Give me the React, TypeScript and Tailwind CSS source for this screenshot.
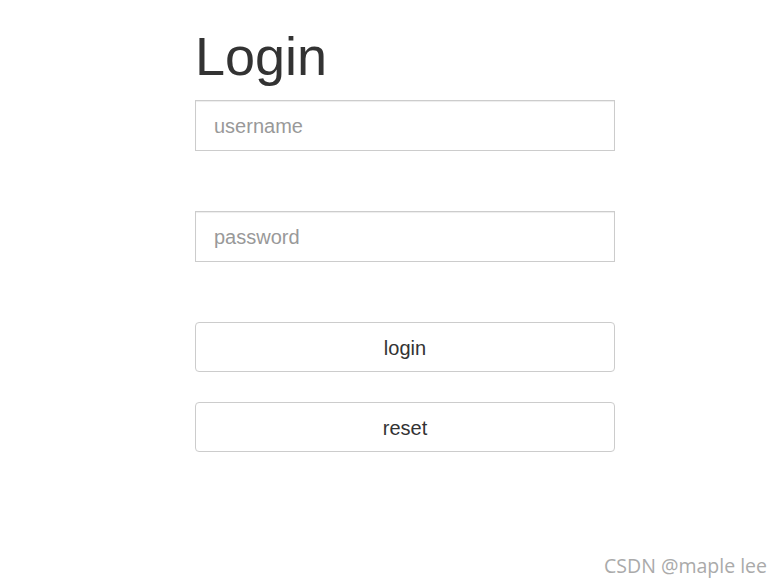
import React from 'react';

const App: React.FC = () => {
    return (
        <div className="relative w-[781px] h-[583px] bg-white overflow-hidden" style={{ fontFamily: '"Liberation Sans", Arial, sans-serif' }}>
            <div className="pl-[195px] pt-[27px] w-[615px]">
                <h1 className="text-[54px] leading-[1.1] text-[#333] font-normal mb-[14px]">Login</h1>

                <input
                    type="text"
                    placeholder="username"
                    className="block w-[420px] h-[51px] px-[18px] pt-[2px] text-[20px] text-[#555] placeholder:text-[#999] border border-[#ccc] shadow-[inset_0_1px_1px_rgba(0,0,0,0.075)] outline-none"
                />
                <input
                    type="password"
                    placeholder="password"
                    className="block mt-[60px] w-[420px] h-[51px] px-[18px] pt-[2px] text-[20px] text-[#555] placeholder:text-[#999] border border-[#ccc] shadow-[inset_0_1px_1px_rgba(0,0,0,0.075)] outline-none"
                />

                <button className="block mt-[60px] w-[420px] h-[50px] pt-[2px] text-[20px] text-[#333] bg-white border border-[#ccc] rounded-[4px]">
                    login
                </button>
                <button className="block mt-[30px] w-[420px] h-[50px] pt-[2px] text-[20px] text-[#333] bg-white border border-[#ccc] rounded-[4px]">
                    reset
                </button>
            </div>

            <div className="absolute right-[14px] bottom-[3px] text-[19.5px] text-[#aaa]" style={{ fontFamily: '"Open Sans", "Noto Sans", sans-serif' }}>
                CSDN @maple lee
            </div>
        </div>
    );
};

export default App;
